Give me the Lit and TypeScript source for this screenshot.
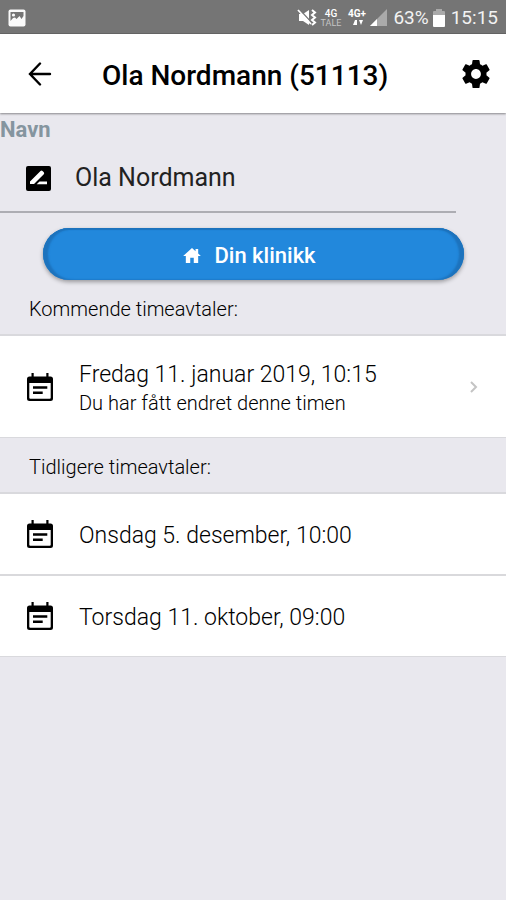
import { LitElement, html, css } from "lit";
import { customElement, state } from "lit/decorators.js";

interface Appointment {
  title: string;
  note?: string;
}

const calendarIcon = html`<svg class="calendar" viewBox="0 0 26 28" aria-hidden="true">
  <path fill="#000" fill-rule="evenodd" d="M4.500 0h2.200v3.500h12.600V0h2.200v3.500H23.500a2.500 2.500 0 0 1 2.500 2.500v19.500a2.500 2.500 0 0 1-2.500 2.500h-21a2.500 2.500 0 0 1-2.500-2.500V6a2.500 2.500 0 0 1 2.500-2.500h2zM2.300 10v14.700q0 1 1 1h19.400q1 0 1-1V10zM6 13.300h14.300v2.500H6zM6 18.600h9.700v2.500H6z"/>
</svg>`;

@customElement("app-root")
export class AppRoot extends LitElement {
  @state() private name = "Ola Nordmann";

  private upcoming: Appointment[] = [
    { title: "Fredag 11. januar 2019, 10:15", note: "Du har fått endret denne timen" },
  ];

  private previous: Appointment[] = [
    { title: "Onsdag 5. desember, 10:00" },
    { title: "Torsdag 11. oktober, 09:00" },
  ];

  static styles = css`
    :host {
      display: block;
      min-height: 100vh;
      background: #e9e8ee;
      color: #111;
      font-family: Roboto, "Liberation Sans", sans-serif;
    }
    * {
      box-sizing: border-box;
    }
    svg {
      display: block;
      flex: none;
    }
    button {
      border: 0;
      padding: 0;
      background: none;
      font: inherit;
      color: inherit;
      cursor: pointer;
    }
    .status {
      display: flex;
      align-items: center;
      height: 34px;
      padding: 2px 8px 0;
      background: #757575;
      border-bottom: 1px solid #666;
      color: #f2f2f2;
      font-size: 19px;
      line-height: 24px;
    }
    .status .photo {
      width: 18px;
      height: 18px;
      margin-right: auto;
    }
    .status .symbols {
      width: 92px;
      height: 20px;
      margin-right: 6px;
    }
    .status .battery {
      width: 12px;
      height: 18px;
      margin: 0 6px 0 4px;
    }
    .bar {
      position: relative;
      display: flex;
      align-items: center;
      height: 79px;
      padding: 0 16px 0 28px;
      background: #fff;
      box-shadow: 0 1px 2px #0000006b;
    }
    .bar h1 {
      flex: 1;
      margin: 0 0 0 50px;
      padding-top: 4px;
      color: #000;
      font-size: 28px;
      line-height: 32px;
      font-weight: 500;
    }
    .bar .back {
      width: 24px;
      height: 24px;
    }
    .bar .gear {
      width: 28px;
      height: 28px;
    }
    .field {
      margin-right: 50px;
      border-bottom: 2px solid #adadb3;
    }
    .field label {
      display: block;
      padding-top: 4px;
      color: #85959f;
      font-size: 22px;
      line-height: 26px;
      font-weight: 700;
    }
    .entry {
      display: flex;
      align-items: center;
      gap: 24px;
      height: 68px;
      padding: 2px 0 0 26px;
    }
    .entry svg {
      width: 25px;
      height: 25px;
    }
    .entry input {
      flex: 1;
      min-width: 0;
      padding: 0;
      border: 0;
      outline: 0;
      background: none;
      color: #222;
      font: inherit;
      font-size: 25px;
      line-height: 32px;
    }
    .action {
      padding: 15px 42px 0 43px;
    }
    .clinic {
      display: flex;
      align-items: center;
      justify-content: center;
      gap: 13px;
      width: 100%;
      height: 52px;
      padding: 2px 8px 0 0;
      border-radius: 26px;
      background: #2288dc;
      box-shadow: inset 5px 0 2px #1d73bd, inset -5px 0 2px #1d73bd,
        inset 0 2px 1px #1d73bd, 0 2px 4px #00000059;
      color: #fff;
      font-size: 22px;
      font-weight: 500;
    }
    .clinic svg {
      width: 18px;
      height: 15px;
    }
    h2 {
      display: flex;
      align-items: center;
      height: 54px;
      margin: 0;
      padding: 4px 29px 0;
      font-size: 20px;
      line-height: 24px;
      font-weight: 300;
      color: #000;
    }
    ul {
      margin: 0;
      padding: 0;
      list-style: none;
      background: #fff;
      border: solid #d9d9dd;
      border-width: 2px 0 1px;
    }
    li + li {
      border-top: 2px solid #d9d9dc;
    }
    .row {
      display: flex;
      align-items: center;
      gap: 26px;
      width: 100%;
      min-height: 80px;
      padding: 0 28px 0 27px;
      color: #000;
      text-align: left;
    }
    .row.tall {
      min-height: 101px;
    }
    .calendar {
      width: 26px;
      height: 28px;
    }
    .text {
      flex: 1;
      display: flex;
      flex-direction: column;
      padding-top: 4px;
      font-size: 23px;
      font-weight: 300;
      line-height: 30px;
    }
    .tall .text {
      padding-top: 2px;
    }
    .note {
      font-size: 20px;
      line-height: 26px;
    }
    .chevron {
      width: 9px;
      height: 12px;
    }
  `;

  private renderRow(item: Appointment) {
    return html`<li>
      <button class="row ${item.note ? "tall" : ""}">
        ${calendarIcon}
        <span class="text">
          <span>${item.title}</span>
          ${item.note ? html`<span class="note">${item.note}</span>` : ""}
        </span>
        ${item.note
          ? html`<svg class="chevron" viewBox="0 0 9 12" aria-hidden="true">
              <path d="M2 1l5 5-5 5" fill="none" stroke="#c4c4c4" stroke-width="2"/>
            </svg>`
          : ""}
      </button>
    </li>`;
  }

  private renderStatus() {
    return html`<div class="status">
      <svg class="photo" viewBox="0 0 18 18" aria-hidden="true">
        <rect x=".5" y=".5" width="17" height="17" rx="2" fill="#fafafa"/>
        <path d="M2.500 3h13v4l-2 3-2-3-3 3-1.500-1.500L5 9l-2.500 3z" fill="#757575"/>
        <circle cx="5.500" cy="6" r="1.600" fill="#fafafa"/>
      </svg>
      <svg class="symbols" viewBox="0 0 92 20" aria-hidden="true">
        <path d="M4 6h4l6-4v15l-6-4H4z" fill="#fff"/>
        <path d="M4 1l12 13" stroke="#757575" stroke-width="1.500"/>
        <path d="M3 2l13 14" stroke="#fff" stroke-width="1.800"/>
        <path d="M17 2l3 2.500-3 2.500 3 2.500-3 2.500 3 2.500-3 2.500" fill="none" stroke="#fff" stroke-width="2"/>
        <g fill="#fff" font-family="Roboto, sans-serif" text-anchor="middle">
          <text x="36" y="9" font-size="10" font-weight="500">4G</text>
          <text x="36" y="18" font-size="9" fill="#c4c4c4">TALE</text>
          <text x="62" y="9" font-size="10" font-weight="700">4G+</text>
        </g>
        <path d="M58 17l2-5h2v5zM64 12h4l-2 5z" fill="#fff"/>
        <path d="M92 1v17H75z" fill="#aaa"/>
        <path d="M82 11v7h-7z" fill="#fff"/>
      </svg>
      <span>63%</span>
      <svg class="battery" viewBox="0 0 12 18" aria-hidden="true">
        <path d="M3 0h6v2h2q1 0 1 1v4H0V3q0-1 1-1h2z" fill="#aaa"/>
        <path d="M0 6h12v11q0 1-1 1H1q-1 0-1-1z" fill="#fff"/>
      </svg>
      <span>15:15</span>
    </div>`;
  }

  render() {
    return html`
      ${this.renderStatus()}
      <header class="bar">
        <button class="back" aria-label="Tilbake">
          <svg viewBox="0 0 24 24" width="24" height="24">
            <path d="M22 12H2M12 1.500L2 12l10 10.500" fill="none" stroke="#000" stroke-width="2.400" stroke-linecap="round"/>
          </svg>
        </button>
        <h1>Ola Nordmann (51113)</h1>
        <button class="gear" aria-label="Innstillinger">
          <svg viewBox="2 2 20 20" width="28" height="28">
            <path d="M19.430 12.980c.040-.320.070-.640.070-.980s-.030-.660-.070-.980l2.110-1.650c.190-.150.240-.420.120-.640l-2-3.460c-.120-.220-.390-.300-.610-.220l-2.490 1c-.520-.400-1.080-.730-1.690-.980l-.380-2.650C14.460 2.180 14.250 2 14 2h-4c-.250 0-.460.180-.490.420l-.380 2.650c-.610.250-1.170.590-1.690.980l-2.490-1c-.230-.090-.490 0-.610.220l-2 3.460c-.130.220-.070.490.120.640l2.110 1.650c-.040.320-.070.650-.070.980s.030.660.070.980l-2.110 1.650c-.190.150-.240.420-.120.640l2 3.460c.120.220.390.300.610.220l2.490-1c.520.400 1.080.730 1.690.980l.380 2.650c.030.240.240.420.490.420h4c.250 0 .460-.180.490-.420l.380-2.650c.610-.250 1.170-.590 1.690-.980l2.490 1c.230.090.490 0 .610-.220l2-3.460c.120-.220.070-.490-.120-.640l-2.110-1.650zM12 15.500c-1.930 0-3.500-1.570-3.500-3.500s1.570-3.500 3.500-3.500 3.500 1.570 3.500 3.500-1.570 3.500-3.500 3.500z"/>
          </svg>
        </button>
      </header>
      <main>
        <div class="field">
          <label for="name">Navn</label>
          <div class="entry">
            <svg viewBox="0 0 25 25" aria-hidden="true">
              <rect width="25" height="25" rx="2" fill="#000"/>
              <path d="M4 15.500L14.500 5q1-.8 2 0l1.300 1.300q.8 1 0 2L8 18h-4zM13.500 15.500H21V18.300H10.700z" fill="#fff"/>
            </svg>
            <input id="name" type="text" .value=${this.name}
              @input=${(e: Event) => (this.name = (e.target as HTMLInputElement).value)} />
          </div>
        </div>
        <div class="action">
          <button class="clinic">
            <svg viewBox="2 3 20 17" aria-hidden="true">
              <path d="M10 20v-6h4v6h5v-8h3l-3-2.700V4h-3v2.600L12 3 2 12h3v8z" fill="#fff"/>
            </svg>
            Din klinikk
          </button>
        </div>
        <h2>Kommende timeavtaler:</h2>
        <ul>${this.upcoming.map((item) => this.renderRow(item))}</ul>
        <h2>Tidligere timeavtaler:</h2>
        <ul>${this.previous.map((item) => this.renderRow(item))}</ul>
      </main>
    `;
  }
}
